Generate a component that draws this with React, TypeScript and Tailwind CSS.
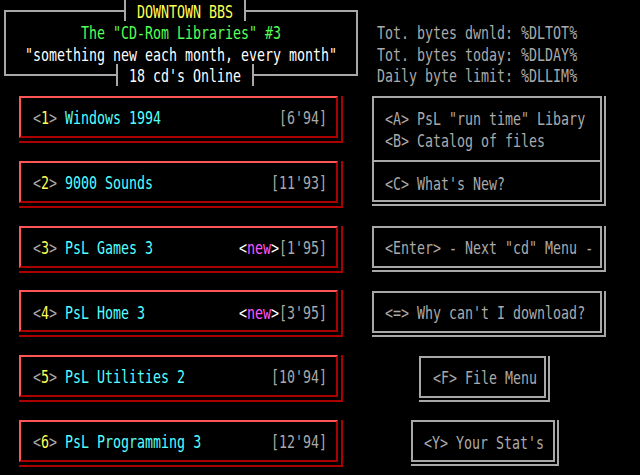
import React from 'react';

// ANSI-style BBS menu screen (80 columns, 8px per char)

interface CdItem {
  key: string;
  name: string;
  date: string;
  isNew?: boolean;
}

const cds: CdItem[] = [
  { key: '1', name: 'Windows 1994', date: "[6'94]" },
  { key: '2', name: '9000 Sounds', date: "[11'93]" },
  { key: '3', name: 'PsL Games 3', date: "[1'95]", isNew: true },
  { key: '4', name: 'PsL Home 3', date: "[3'95]", isNew: true },
  { key: '5', name: 'PsL Utilities 2', date: "[10'94]" },
  { key: '6', name: 'PsL Programming 3', date: "[12'94]" },
];

const redBox =
  'h-[42px] border-2 border-t-[#ff5555] border-l-[#ff5555] border-r-[#aa0000] border-b-[#aa0000] shadow-[3px_3px_0_0_#000,3px_0_0_0_#000,0_3px_0_0_#000,5px_0_0_0_#aa0000,0_5px_0_0_#aa0000,5px_5px_0_0_#aa0000]';

const grayBox =
  'border-2 border-[#a8a8a8] shadow-[2px_2px_0_0_#000,2px_0_0_0_#000,0_2px_0_0_#000,4px_0_0_0_#a8a8a8,0_4px_0_0_#a8a8a8,4px_4px_0_0_#a8a8a8]';

const line = 'border-[#a8a8a8]';

// tall narrow VGA-like glyphs
const vga = 'scale-y-[1.3] translate-y-[1.5px]';

function CdRow({ item }: { item: CdItem }) {
  return (
    <div className={`${redBox} flex items-center pl-[12px] pr-[9px]`}>
      <div className={`flex-1 flex justify-between ${vga}`}>
        <span>
          <span className="text-[#aaaaaa]">&lt;</span>
          <span className="text-[#ffff55]">{item.key}</span>
          <span className="text-[#aaaaaa]">&gt; </span>
          <span className="text-[#55ffff]">{item.name}</span>
        </span>
        <span>
          {item.isNew && (
            <>
              <span className="text-white">&lt;</span>
              <span className="text-[#ff55ff]">new</span>
              <span className="text-white">&gt;</span>
            </>
          )}
          <span className="text-[#aaaaaa]">{item.date}</span>
        </span>
      </div>
    </div>
  );
}

function GrayButton({ label, className }: { label: string; className: string }) {
  return (
    <div className={`${grayBox} h-[42px] flex items-center ${className}`}>
      <div className={`${vga} whitespace-pre`}>{label}</div>
    </div>
  );
}

export default function App() {
  return (
    <div className="w-[640px] h-[475px] bg-black overflow-hidden font-['DejaVu_Sans_Mono','Liberation_Mono',monospace] text-[13.3px] leading-[21.5px] text-[#aaaaaa]">
      {/* header */}
      <div className="flex">
        <div className="ml-[4px] w-[354px] flex flex-col">
          <div className="flex h-[21px]">
            <div className={`w-[120px] mt-[10px] border-t-2 border-l-2 ${line}`} />
            <div className={`w-[122px] border-x-2 ${line} text-center text-[#ffff55] leading-[21px]`}>
              <div className={vga}>DOWNTOWN BBS</div>
            </div>
            <div className={`flex-1 mt-[10px] border-t-2 border-r-2 ${line}`} />
          </div>
          <div className={`h-[43px] border-x-2 ${line} text-center`}>
            <div className={`${vga} text-[#55ff55]`}>The "CD-Rom Libraries" #3</div>
            <div className={`${vga} text-white`}>"something new each month, every month"</div>
          </div>
          <div className="flex h-[22px]">
            <div className={`w-[112px] h-[12px] border-l-2 border-b-2 ${line}`} />
            <div className={`w-[138px] border-x-2 ${line} text-center text-white leading-[22px]`}>
              <div className={vga}>18 cd's Online</div>
            </div>
            <div className={`flex-1 h-[12px] border-r-2 border-b-2 ${line}`} />
          </div>
        </div>
        <div className="ml-[19px] mt-[21px] whitespace-pre">
          <div className={vga}>Tot. bytes dwnld: %DLTOT%</div>
          <div className={vga}>Tot. bytes today: %DLDAY%</div>
          <div className={vga}>Daily byte limit: %DLLIM%</div>
        </div>
      </div>

      {/* menus */}
      <div className="flex mt-[10px]">
        <div className="ml-[19px] w-[319px] flex flex-col gap-[22.8px]">
          {cds.map((c) => (
            <CdRow key={c.key} item={c} />
          ))}
        </div>

        <div className="ml-[34px] w-[230px] flex flex-col gap-[22.8px]">
          <div className={`${grayBox} h-[106px] flex flex-col mb-[1.2px]`}>
            <div className="h-[62px] pt-[9px] pl-[11px] whitespace-pre">
              <div className={vga}>&lt;A&gt; PsL "run time" Libary</div>
              <div className={vga}>&lt;B&gt; Catalog of files</div>
            </div>
            <div className={`flex-1 border-t-2 ${line} flex items-center pl-[11px] pt-[3px]`}>
              <div className={vga}>&lt;C&gt; What's New?</div>
            </div>
          </div>
          <GrayButton label={'<Enter> - Next "cd" Menu -'} className="pl-[11px]" />
          <GrayButton label="<=> Why can't I download?" className="pl-[11px]" />
          <GrayButton label="<F> File Menu" className="ml-[47px] w-[127px] pl-[12px]" />
          <GrayButton label="<Y> Your Stat's" className="ml-[39px] w-[144px] pl-[11px]" />
        </div>
      </div>
    </div>
  );
}
